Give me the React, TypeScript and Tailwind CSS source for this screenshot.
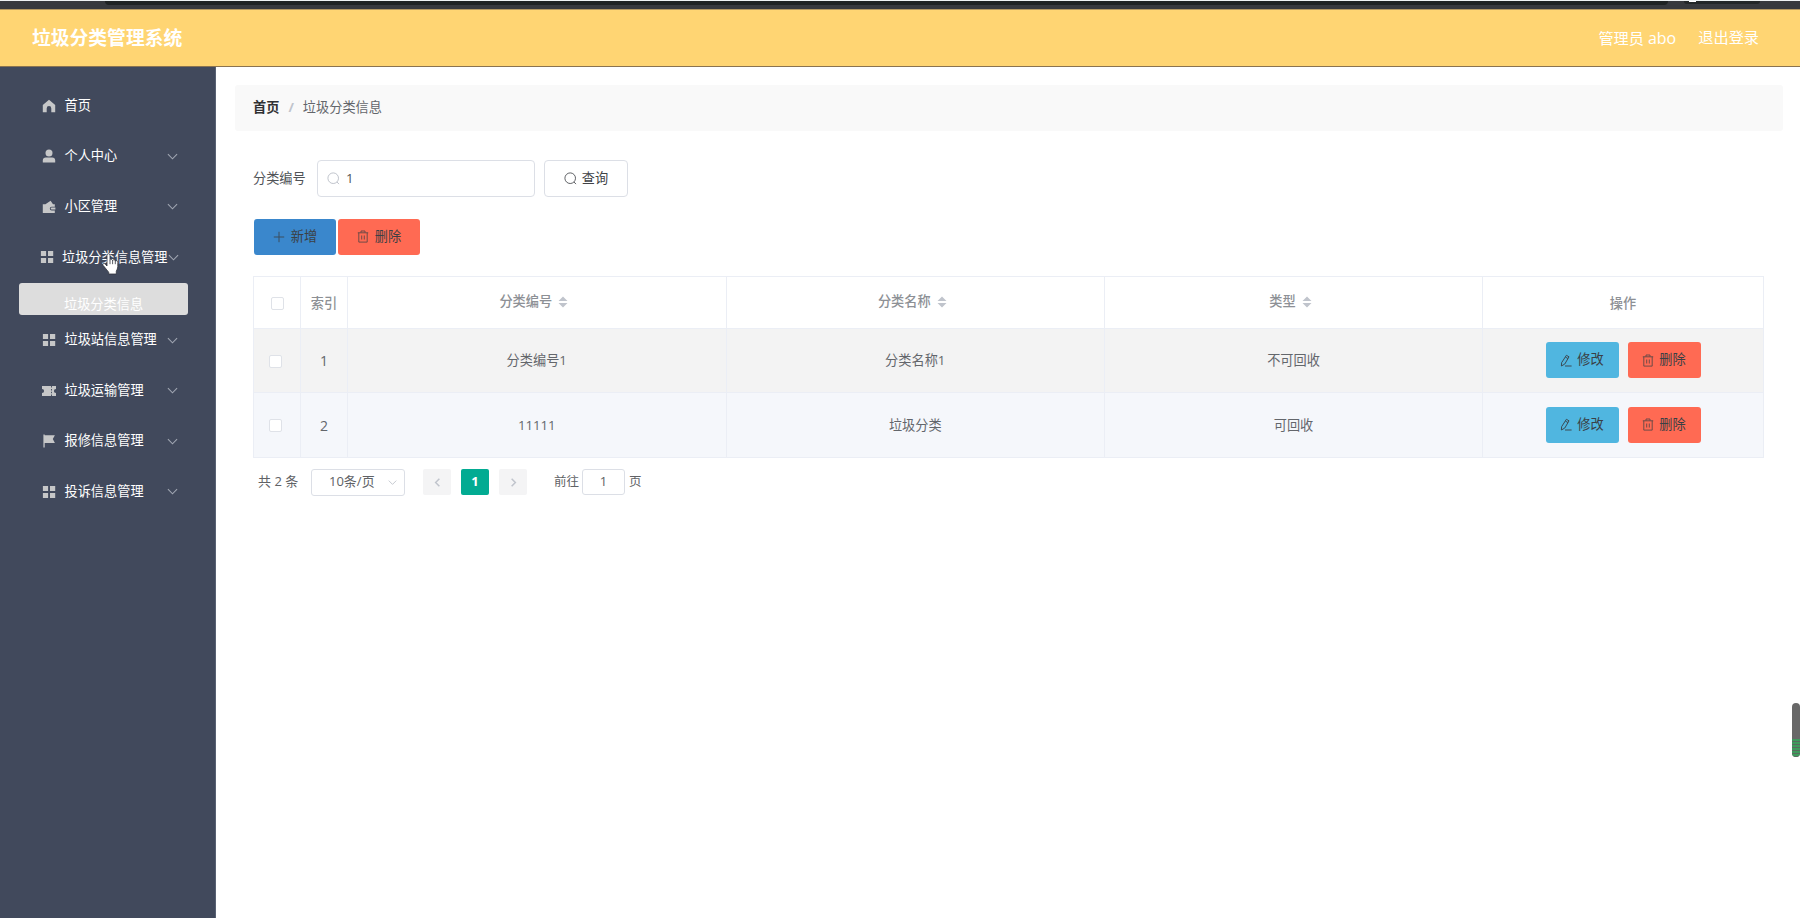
import type { ReactNode } from 'react';

const MENU = [
  { label: '首页', icon: 'home', arrow: false },
  { label: '个人中心', icon: 'user', arrow: true },
  { label: '小区管理', icon: 'wallet', arrow: true },
  { label: '垃圾分类信息管理', icon: 'grid', arrow: true, sub: '垃圾分类信息' },
  { label: '垃圾站信息管理', icon: 'grid', arrow: true },
  { label: '垃圾运输管理', icon: 'ticket', arrow: true },
  { label: '报修信息管理', icon: 'flag', arrow: true },
  { label: '投诉信息管理', icon: 'grid', arrow: true },
];

const ROWS = [
  { id: 1, code: '分类编号1', name: '分类名称1', type: '不可回收', bg: 'bg-[#f3f3f3]' },
  { id: 2, code: '11111', name: '垃圾分类', type: '可回收', bg: 'bg-[#f5f7fb]' },
];

const MENU_ICONS: Record<string, ReactNode> = {
  home: <path d="M7 .8 .8 6v7.2h3.9V9.4a2.3 2.3 0 0 1 4.6 0v3.8h3.9V6z" />,
  user: (
    <>
      <circle cx="7" cy="3.9" r="3.5" />
      <path d="M.8 13.4v-2.2a3 3 0 0 1 3-2.8h6.4a3 3 0 0 1 3 2.8v2.2z" />
    </>
  ),
  wallet: (
    <path d="M.8 4.2h2.6L8.6.8 11 4.2h1.8v2.5H9.7a1.9 1.9 0 0 0 0 3.8h3.1v2.6H.8zM9.7 7.6h3.7v2H9.7a1 1 0 0 1 0-2z" />
  ),
  grid: <path d="M.9 1h5.2v5.1H.9zM8 1h5.2v5.1H8zM.9 7.9h5.2V13H.9zM8 7.9h5.2V13H8z" />,
  ticket: (
    <path d="M0 2h9.1v1.5h.9V2h4v2.9a2.1 2.1 0 0 0 0 4.2V12h-4v-1.5h-.9V12H0V9.1a2.1 2.1 0 0 0 0-4.2zM9.1 5v1.5h.9V5zm0 2.8v1.5h.9V7.8z" />
  ),
  flag: <path d="M1.4.6h1.3v.7h10.2L10.8 5.1l2.1 3.9H2.7v4.6H1.4z" />,
};

function MenuIcon({ name }: { name: string }) {
  return (
    <svg viewBox="0 0 14 14" className="size-[14px] shrink-0 fill-[#c6c7c8]" fillRule="evenodd">
      {MENU_ICONS[name]}
    </svg>
  );
}

function Chevron({ className, d = 'M1 3.5 6 8.5 11 3.5', weight = 1.2 }: { className: string; d?: string; weight?: number }) {
  return (
    <svg viewBox="0 0 12 12" className={`fill-none ${className}`} strokeWidth={weight}>
      <path d={d} />
    </svg>
  );
}

function SearchIcon({ className }: { className: string }) {
  return (
    <svg viewBox="0 0 13 13" className={`size-[13px] shrink-0 fill-none ${className}`}>
      <circle cx="6.2" cy="6.2" r="5.3" />
      <path d="m10 10 2 2.1" />
    </svg>
  );
}

function TrashIcon() {
  return (
    <svg viewBox="0 0 12 13" className="h-[13px] w-3 shrink-0 fill-none stroke-current opacity-80" strokeWidth="0.9">
      <path d="M.8 2.8h10.4M4 2.6V1h4v1.6M1.8 2.8v9.3h8.4V2.8M4.7 5.5v4M7.3 5.5v4" />
    </svg>
  );
}

function EditIcon() {
  return (
    <svg viewBox="0 0 12 13" className="h-[13px] w-3 shrink-0 fill-none stroke-current opacity-90" strokeWidth="1">
      <path d="M6.4 1.3 9 2.8 4.8 10 1.4 12l.2-3.3zM5.4 3.1 8 4.6M5 12h6.6" />
    </svg>
  );
}

function Checkbox() {
  return <span className="block size-[13px] rounded-[2px] border border-[#dfe2e8] bg-white" />;
}

function SortCaret() {
  return (
    <svg viewBox="0 0 10 12" className="ml-[6px] h-3 w-[10px] fill-[#c0c4cc]">
      <path d="M5 .5 9.5 5h-9zM5 11.5.5 7h9z" />
    </svg>
  );
}

function Sidebar() {
  return (
    <aside className="w-[216px] shrink-0 border-r border-[#596274] bg-[#41495c] pt-[13.4px]">
      {MENU.map((item) => (
        <div key={item.label}>
          <div className={`flex h-[50.6px] items-center text-white ${item.sub ? 'pl-[40px]' : 'pl-[42px]'}`}>
            <MenuIcon name={item.icon} />
            <span className={`whitespace-nowrap ${item.sub ? 'ml-2' : 'ml-[8.5px]'}`}>{item.label}</span>
            {item.arrow && <Chevron className="mr-[37px] ml-auto size-[11px] shrink-0 stroke-[#a0a6b2]" />}
          </div>
          {item.sub && (
            <div className="ml-[19px] h-[32px] w-[169px] rounded-[3px] bg-[#dddddd] pt-[11px] pl-[45px] leading-5 text-white">
              {item.sub}
            </div>
          )}
        </div>
      ))}
    </aside>
  );
}

function RowActions() {
  return (
    <div className="flex items-center justify-center gap-[9px] text-[#3a4045]">
      <button className="flex h-[36px] w-[73px] items-center justify-center gap-[5px] rounded-[3px] bg-[#50b6e0]">
        <EditIcon />
        修改
      </button>
      <button className="flex h-[36px] w-[73px] items-center justify-center gap-[5px] rounded-[3px] bg-[#ff6a53]">
        <TrashIcon />
        删除
      </button>
    </div>
  );
}

const COLS = 'grid grid-cols-[47px_47px_378.5px_378.5px_378px_281px]';
const CELL = 'flex items-center justify-center border-r border-b border-[#ebeef5]';

function DataTable() {
  return (
    <div className="mt-[21px] w-[1511px] border-t border-l border-[#ebeef5] text-[#63666b]">
      <div className={`${COLS} h-[52px] font-medium text-[#8d9095]`}>
        <div className={`${CELL} pt-[2px]`}><Checkbox /></div>
        <div className={`${CELL} pt-[3px]`}>索引</div>
        {['分类编号', '分类名称', '类型'].map((h) => (
          <div key={h} className={`${CELL} pr-[6px]`}>
            {h}
            <SortCaret />
          </div>
        ))}
        <div className={`${CELL} pt-[3px]`}>操作</div>
      </div>
      {ROWS.map((row) => (
        <div key={row.id} className={`${COLS} h-[64.5px] ${row.bg}`}>
          <div className={`${CELL} pt-[2px] pr-[3px]`}><Checkbox /></div>
          <div className={`${CELL} pt-[2px] text-sm`}>{row.id}</div>
          <div className={`${CELL} pt-[2px]`}>{row.code}</div>
          <div className={`${CELL} pt-[2px]`}>{row.name}</div>
          <div className={`${CELL} pt-[2px]`}>{row.type}</div>
          <div className={CELL}><RowActions /></div>
        </div>
      ))}
    </div>
  );
}

function Pagination() {
  return (
    <div className="mt-[11px] flex h-[27px] items-center pl-[5px] text-[13px] text-[#606266]">
      <span className="w-[53px]">共 2 条</span>
      <div className="flex h-[27px] w-[94px] items-center justify-between rounded-[3px] border border-[#dcdfe6] pr-[7px] pl-[17px]">
        10条/页
        <Chevron className="size-[9px] stroke-[#c0c4cc]" />
      </div>
      <button className="ml-[18px] flex h-[26px] w-7 items-center justify-center rounded-[2px] bg-[#f4f4f5]">
        <Chevron d="M8.5 1 3.5 6l5 5" weight={2} className="size-[9px] stroke-[#c0c4cc]" />
      </button>
      <button className="ml-[10px] flex h-[26px] w-7 items-center justify-center rounded-[2px] bg-[#02ab92] font-bold text-white">1</button>
      <button className="ml-[10px] flex h-[26px] w-7 items-center justify-center rounded-[2px] bg-[#f4f4f5]">
        <Chevron d="m3.5 1 5 5-5 5" weight={2} className="size-[9px] stroke-[#c0c4cc]" />
      </button>
      <span className="ml-[27px] w-[28px] text-[12.5px]">前往</span>
      <div className="flex h-[26px] w-[43px] items-center justify-center rounded-[3px] border border-[#dcdfe6]">1</div>
      <span className="ml-1 text-[12.5px]">页</span>
    </div>
  );
}

function HandCursor() {
  return (
    <svg viewBox="0 0 17 22" className="absolute top-[253px] left-[102px] h-[22px] w-[17px] fill-white stroke-[#30343c]" strokeWidth="0.8">
      <path d="M5 13V2.2a1.5 1.5 0 0 1 3 0v5a1.4 1.4 0 0 1 2.6.4 1.4 1.4 0 0 1 2.7.6 1.4 1.4 0 0 1 2.5 1v4.4c0 2-.9 3.2-1.5 4.6V21H6.7v-1.8C5.1 17.4 3.2 14.6 1 12.3c-.8-1.3.9-2.5 2.2-1.3z" />
      <path d="M8 7.2v4M10.6 7.6v3.6M13.3 8.2v3" />
    </svg>
  );
}

export default function App() {
  return (
    <div className="relative flex h-[918px] w-[1800px] flex-col overflow-hidden bg-white font-['Open_Sans','Noto_Sans_CJK_SC',sans-serif] text-[13.2px]">
      {/* lower edge of the browser toolbar */}
      <div className="h-[9px] shrink-0 border-t border-[#eef3f3] bg-[#36393d]">
        <div className="flex justify-between pr-[40px] pl-[105px]">
          <div className="h-[4px] w-[1563px] rounded-b-[4px] bg-[#1e2323]" />
          <div className="flex h-[3px] w-[76px] rounded-b-[3px] bg-[#222728]">
            <span className="ml-[5px] h-px w-[7px] bg-white" />
          </div>
        </div>
      </div>

      <header className="flex h-[58px] shrink-0 items-center justify-between border-t border-b border-t-[#b3985f] border-b-[#8a7350] bg-[#ffd573] pr-[41px] pl-8 text-white">
        <h1 className="text-[18.8px] font-bold">垃圾分类管理系统</h1>
        <div className="flex gap-[22px] pb-px text-[15.2px]">
          <span>
            管理员 <span className="text-base">abo</span>
          </span>
          <span>退出登录</span>
        </div>
      </header>

      <div className="flex min-h-0 flex-1">
        <Sidebar />
        <main className="flex-1 pt-[18px] pl-[19px]">
          <nav className="flex h-[46px] w-[1548px] items-center rounded-[3px] bg-[#f9f9f9] pl-[18px] text-[#63666b]">
            <span className="font-bold text-[#303133]">首页</span>
            <span className="mx-[9px] font-bold text-[#c0c4cc]">/</span>
            <span>垃圾分类信息</span>
          </nav>

          <div className="pt-[29px] pl-[18px]">
            <div className="flex h-[37px] items-center text-[#505357]">
              <span className="w-[64px]">分类编号</span>
              <div className="flex h-[37px] w-[218px] items-center rounded-[4px] border border-[#dcdfe6] pl-[9px]">
                <SearchIcon className="stroke-[#c0c4cc]" />
                <span className="ml-[6px]">1</span>
              </div>
              <button className="ml-[9px] flex h-[37px] w-[84px] items-center justify-center gap-[5px] rounded-[4px] border border-[#dcdfe6] text-[#404246]">
                <SearchIcon className="stroke-[#606266]" />
                查询
              </button>
            </div>

            <div className="mt-[21.5px] flex gap-[2px] pl-px text-[#3c4044]">
              <button className="flex h-[36px] w-[82px] items-center justify-center gap-[6px] rounded-[3px] bg-[#3a87cc]">
                <svg viewBox="0 0 12 12" className="size-3 stroke-current opacity-80">
                  <path d="M6 .8v10.4M.8 6h10.4" />
                </svg>
                新增
              </button>
              <button className="flex h-[36px] w-[82px] items-center justify-center gap-[6px] rounded-[3px] bg-[#ff6a53]">
                <TrashIcon />
                删除
              </button>
            </div>

            <DataTable />
            <Pagination />
          </div>
        </main>
      </div>

      <HandCursor />

      {/* floating level meter at the screen edge */}
      <div className="absolute top-[703px] right-0 flex h-[54px] w-[8px] flex-col justify-end overflow-hidden rounded-[4px] bg-[#686868]">
        <div className="h-[18px] bg-[repeating-linear-gradient(#3f9a5c_0_2px,#5a6b5f_2px_3px)]" />
      </div>
    </div>
  );
}
